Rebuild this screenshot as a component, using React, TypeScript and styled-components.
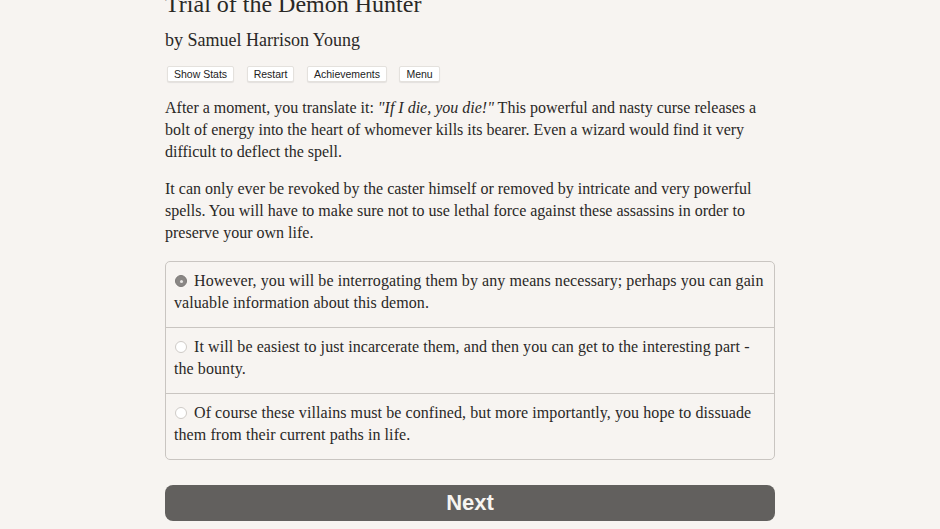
import React, { useState } from "react";
import styled, { createGlobalStyle } from "styled-components";

const Global = createGlobalStyle`
  html, body { margin: 0; padding: 0; background: #f7f4f1; }
  body { font-family: "Liberation Serif", "Times New Roman", serif; color: #2a2826; overflow: hidden; }
`;

const Page = styled.div`
  width: 610px;
  margin: 0 auto;
  margin-top: -10px;
`;

const Title = styled.h1`
  margin: 0;
  font-size: 24px;
  line-height: 28px;
  font-weight: normal;
`;

const Byline = styled.h2`
  margin: 9px 0 0 0;
  font-size: 18px;
  line-height: 26px;
  font-weight: normal;
`;

const Toolbar = styled.div`
  display: flex;
  gap: 12.5px;
  margin: 13px 0 0 2px;
`;

const ToolButton = styled.button`
  font-family: "Liberation Sans", Arial, sans-serif;
  font-size: 10.5px;
  line-height: 14px;
  height: 16px;
  padding: 0 6px;
  background: #ffffff;
  color: #222;
  border: 1px solid #e4e1dd;
  border-radius: 2px;
  box-shadow: 0 1px 1px rgba(0,0,0,0.08);
`;

const Para = styled.p`
  margin: 15px 0 0 0;
  font-size: 16px;
  line-height: 22px;
`;

const Choices = styled.div`
  margin-top: 17px;
  border: 1px solid #c9c5c1;
  border-radius: 5px;
  overflow: hidden;
`;

const Choice = styled.label<{ $first?: boolean }>`
  display: block;
  padding: 8px 4px 13px 8px;
  font-size: 16px;
  line-height: 22px;
  letter-spacing: 0.08px;
  border-top: ${(p) => (p.$first ? "none" : "1px solid #c9c5c1")};
  cursor: pointer;
`;

const Radio = styled.span<{ $checked?: boolean }>`
  display: inline-block;
  width: 12px;
  height: 12px;
  border-radius: 50%;
  margin: 0 7px 0 1px;
  vertical-align: -1px;
  box-sizing: border-box;
  background: ${(p) => (p.$checked ? "#8a8785" : "#ffffff")};
  border: 1px solid ${(p) => (p.$checked ? "#7d7a78" : "#cfcbc7")};
  position: relative;
  &::after {
    content: "";
    display: ${(p) => (p.$checked ? "block" : "none")};
    position: absolute;
    left: 3.5px;
    top: 3.5px;
    width: 3px;
    height: 3px;
    border-radius: 50%;
    background: #e8e6e4;
  }
`;

const Next = styled.button`
  display: block;
  width: 100%;
  height: 36px;
  margin-top: 25px;
  background: #62605e;
  color: #f7f4f1;
  border: none;
  border-radius: 8px;
  font-family: "Liberation Sans", Arial, sans-serif;
  font-weight: bold;
  font-size: 22px;
  line-height: 36px;
  padding: 0;
`;

const options = [
  "However, you will be interrogating them by any means necessary; perhaps you can gain valuable information about this demon.",
  "It will be easiest to just incarcerate them, and then you can get to the interesting part - the bounty.",
  "Of course these villains must be confined, but more importantly, you hope to dissuade them from their current paths in life.",
];

export default function App() {
  const [sel, setSel] = useState(0);
  return (
    <>
      <Global />
      <Page>
        <Title>Trial of the Demon Hunter</Title>
        <Byline>by Samuel Harrison Young</Byline>
        <Toolbar>
          <ToolButton>Show Stats</ToolButton>
          <ToolButton>Restart</ToolButton>
          <ToolButton>Achievements</ToolButton>
          <ToolButton>Menu</ToolButton>
        </Toolbar>
        <Para>
          After a moment, you translate it: <i>"If I die, you die!"</i> This powerful and nasty
          curse releases a bolt of energy into the heart of whomever kills its bearer. Even a
          wizard would find it very difficult to deflect the spell.
        </Para>
        <Para>
          It can only ever be revoked by the caster himself or removed by intricate and very
          powerful spells. You will have to make sure not to use lethal force against these
          assassins in order to preserve your own life.
        </Para>
        <Choices>
          {options.map((o, i) => (
            <Choice key={i} $first={i === 0} onClick={() => setSel(i)}>
              <Radio $checked={sel === i} />
              {o}
            </Choice>
          ))}
        </Choices>
        <Next>Next</Next>
      </Page>
    </>
  );
}
